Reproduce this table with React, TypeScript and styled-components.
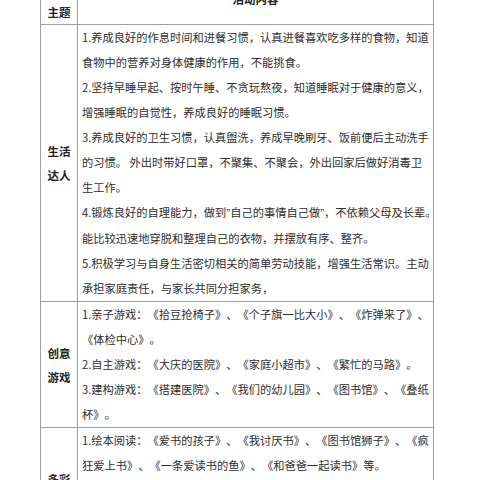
import React from "react";
import styled, { createGlobalStyle } from "styled-components";

const Global = createGlobalStyle`
  html, body {
    margin: 0;
    padding: 0;
    background: #ffffff;
    overflow: hidden;
  }
  body {
    font-family: "Noto Sans CJK SC", "Noto Sans", sans-serif;
    color: #333333;
  }
`;

const Page = styled.div`
  width: 480px;
  height: 480px;
  overflow: hidden;
`;

const Grid = styled.div`
  display: grid;
  grid-template-columns: 37px 356px;
  width: 394px;
  margin: -28px 0 0 40px;
  border-left: 1px solid #9e9e9e;
  border-top: 1px solid #9e9e9e;
`;

const HeadCell = styled.div<{ $align: "end" | "center" }>`
  box-sizing: border-box;
  height: 52px;
  display: flex;
  justify-content: center;
  align-items: ${(p) => (p.$align === "end" ? "flex-end" : "center")};
  border-right: 1px solid #9e9e9e;
  border-bottom: 1px solid #9e9e9e;
  font-weight: 700;
  font-size: 11.5px;
  line-height: 24px;
  color: #222222;
`;

const LabelCell = styled.div`
  box-sizing: border-box;
  display: flex;
  flex-direction: column;
  justify-content: center;
  align-items: center;
  border-right: 1px solid #9e9e9e;
  border-bottom: 1px solid #9e9e9e;
  font-weight: 700;
  font-size: 11.5px;
  line-height: 24px;
  color: #222222;
`;

const ContentCell = styled.div`
  box-sizing: border-box;
  padding: 0 0 0 4px;
  border-right: 1px solid #9e9e9e;
  border-bottom: 1px solid #9e9e9e;
  font-size: 11.25px;
  line-height: 25px;
  color: #2e2e2e;
  text-spacing-trim: space-all;
  font-feature-settings: "halt" 0;
`;

const Line = styled.div`
  white-space: nowrap;
`;

const Quote = styled.span`
  font-family: "Liberation Sans", sans-serif;
`;

type Piece = string | { q: string };

const rows: { label: string[]; lines: Piece[][] }[] = [
  {
    label: ["生活", "达人"],
    lines: [
      ["1.养成良好的作息时间和进餐习惯，认真进餐喜欢吃多样的食物，知道"],
      ["食物中的营养对身体健康的作用，不能挑食。"],
      ["2.坚持早睡早起、按时午睡、不贪玩熬夜，知道睡眠对于健康的意义，"],
      ["增强睡眠的自觉性，养成良好的睡眠习惯。"],
      ["3.养成良好的卫生习惯，认真盥洗，养成早晚刷牙、饭前便后主动洗手"],
      ["的习惯。 外出时带好口罩，不聚集、不聚会，外出回家后做好消毒卫"],
      ["生工作。"],
      [
        "4.锻炼良好的自理能力，做到",
        { q: "\u201d" },
        "自己的事情自己做",
        { q: "\u201d" },
        "，不依赖父母及长辈。",
      ],
      ["能比较迅速地穿脱和整理自己的衣物，并摆放有序、整齐。"],
      ["5.积极学习与自身生活密切相关的简单劳动技能，增强生活常识。主动"],
      ["承担家庭责任，与家长共同分担家务，"],
    ],
  },
  {
    label: ["创意", "游戏"],
    lines: [
      ["1.亲子游戏：《拾豆抢椅子》、《个子旗一比大小》、《炸弹来了》、"],
      ["《体检中心》。"],
      ["2.自主游戏：《大庆的医院》、《家庭小超市》、《繁忙的马路》。"],
      ["3.建构游戏：《搭建医院》、《我们的幼儿园》、《图书馆》、《叠纸"],
      ["杯》。"],
    ],
  },
  {
    label: ["多彩", "阅读"],
    lines: [
      ["1.绘本阅读：《爱书的孩子》、《我讨厌书》、《图书馆狮子》、《疯"],
      ["狂爱上书》、《一条爱读书的鱼》、《和爸爸一起读书》等。"],
      ["2.亲子共读：每天坚持和爸爸妈妈一起阅读绘本，分享故事中的乐趣，"],
      ["养成良好的阅读习惯。"],
      ["3.爱护图书，学会整理自己的小书架。"],
    ],
  },
];

export default function App() {
  return (
    <Page>
      <Global />
      <Grid>
        <HeadCell $align="end">主题</HeadCell>
        <HeadCell $align="center">活动内容</HeadCell>
        {rows.map((r, i) => (
          <React.Fragment key={i}>
            <LabelCell>
              {r.label.map((l, j) => (
                <div key={j}>{l}</div>
              ))}
            </LabelCell>
            <ContentCell>
              {r.lines.map((pieces, j) => (
                <Line key={j}>
                  {pieces.map((p, k) =>
                    typeof p === "string" ? (
                      <React.Fragment key={k}>{p}</React.Fragment>
                    ) : (
                      <Quote key={k}>{p.q}</Quote>
                    )
                  )}
                </Line>
              ))}
            </ContentCell>
          </React.Fragment>
        ))}
      </Grid>
    </Page>
  );
}
